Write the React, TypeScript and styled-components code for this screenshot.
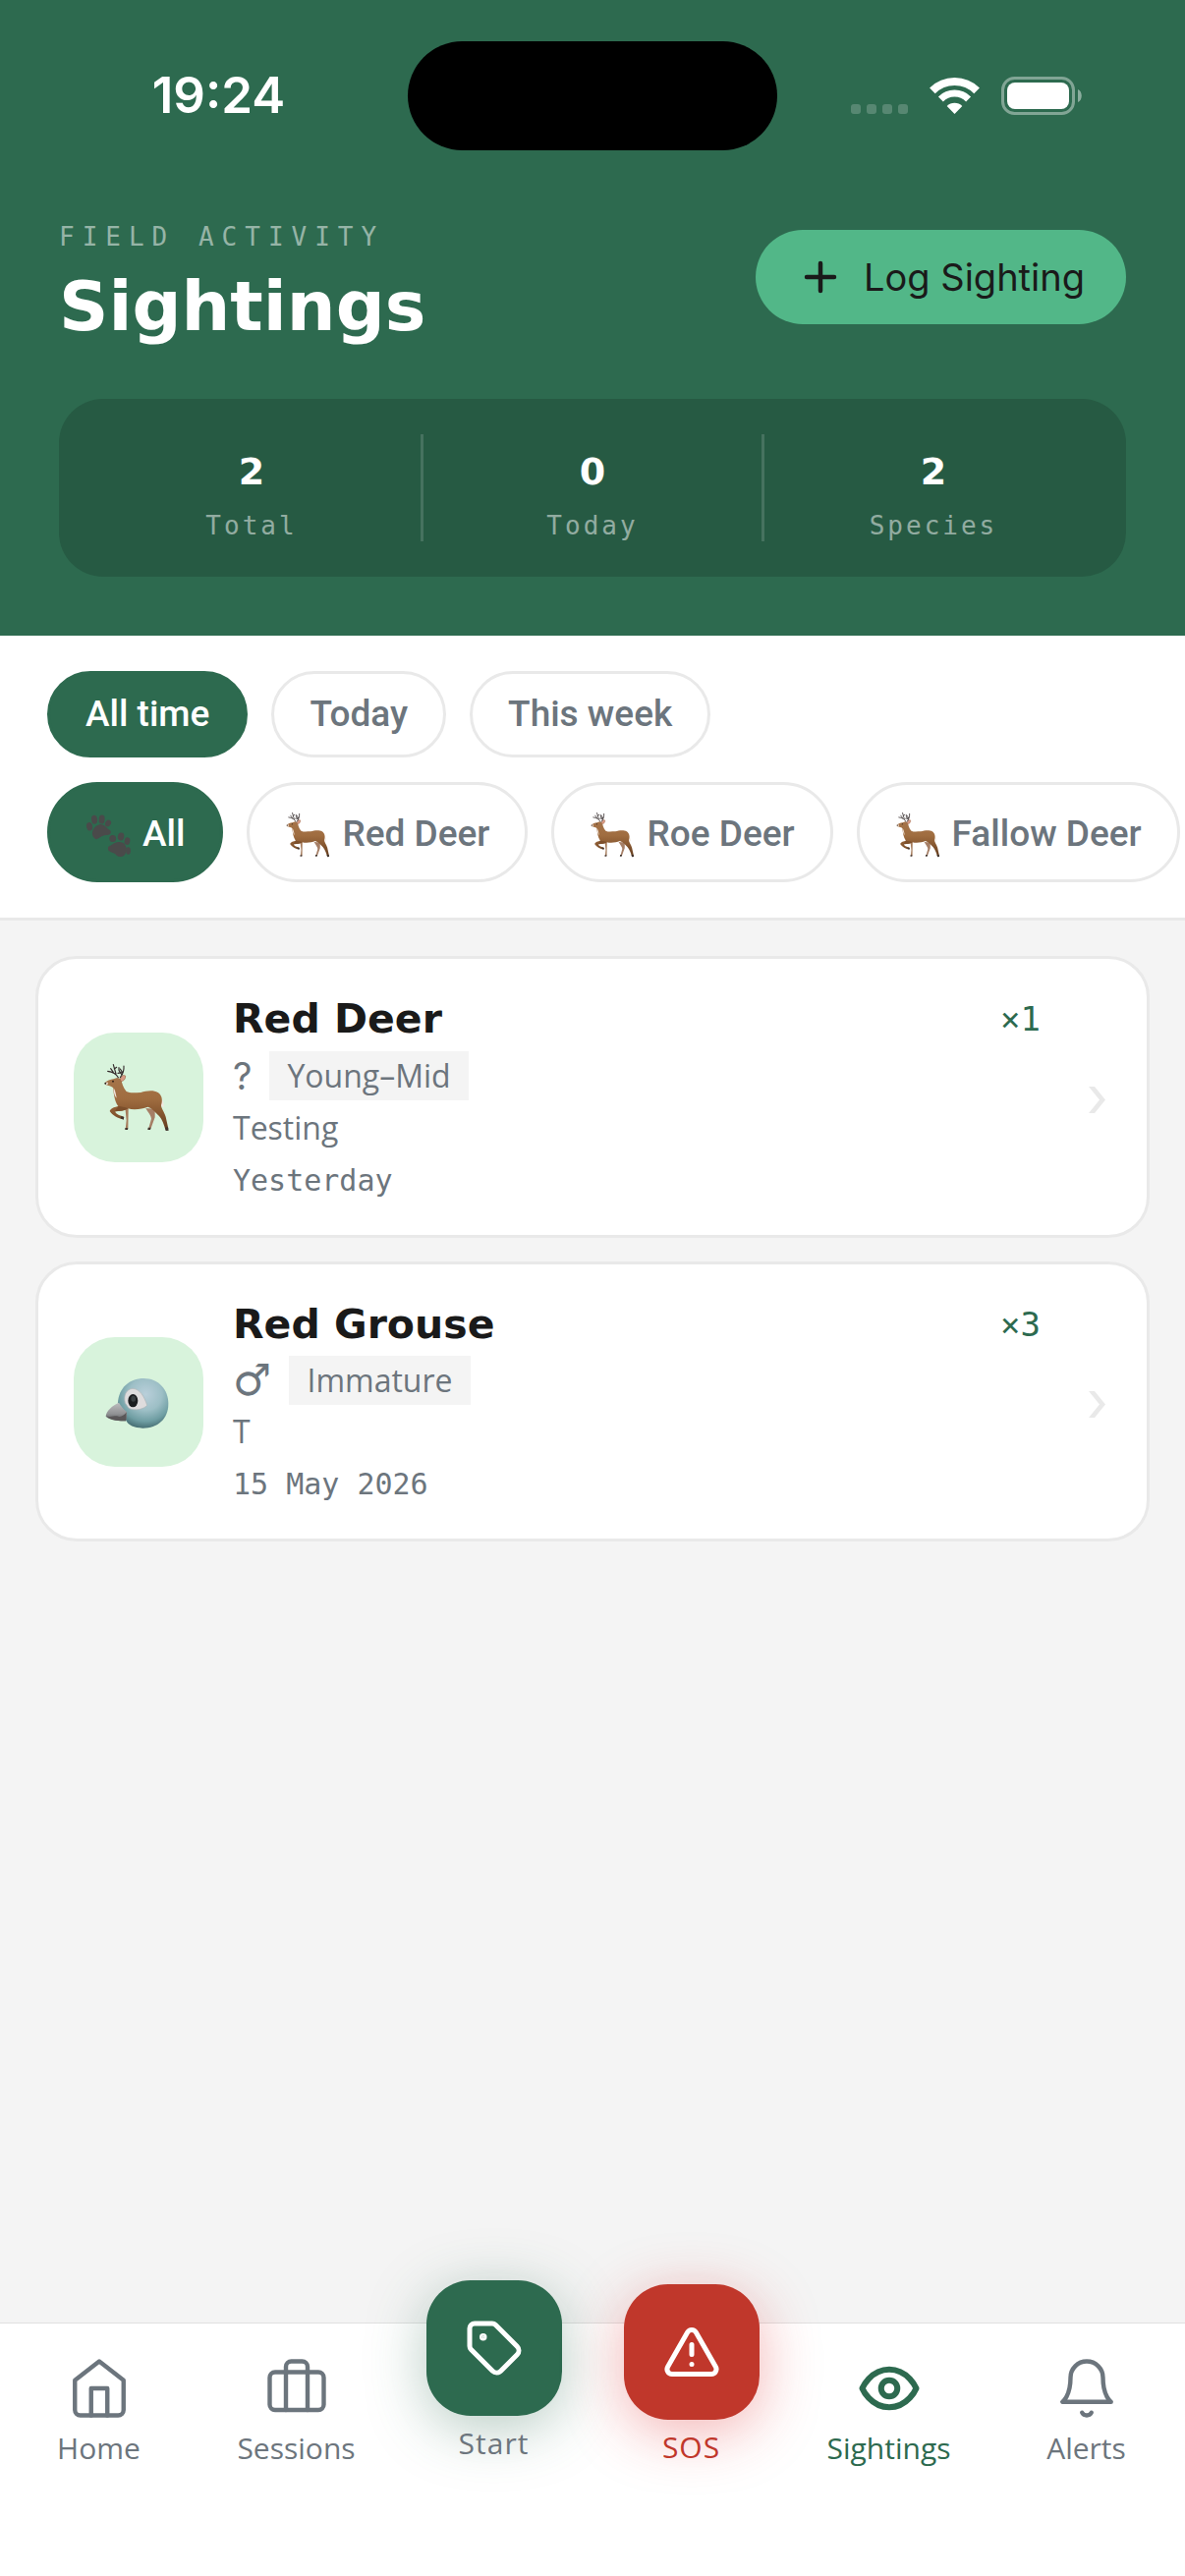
import React, { useState } from "react";
import styled, { createGlobalStyle } from "styled-components";

const color = {
  forest: "#2D6A4F",
  mint: "#52B788",
  pale: "#D8F3DC",
  ink: "#1A1A1A",
  muted: "#6C757D",
  line: "#E9E9E9",
  page: "#F4F4F4",
  danger: "#C0372B",
};

const sans = `"Open Sans", "Noto Sans", sans-serif`;
const display = `"DejaVu Sans", "Open Sans", sans-serif`;
const mono = `"DejaVu Sans Mono", "Liberation Mono", monospace`;
const system = `Inter, Roboto, sans-serif`;
const medium = `Roboto, Inter, sans-serif`;

const GlobalStyle = createGlobalStyle`
  *, *::before, *::after { box-sizing: border-box; }
  body { margin: 0; background: ${color.page}; font-family: ${sans}; color: ${color.ink}; }
  h1, h2, p, dl, dt, dd, ul { margin: 0; padding: 0; }
  ul { list-style: none; }
  button { font: inherit; cursor: pointer; }
  a { color: inherit; text-decoration: none; }
  svg { display: block; flex: none; }
`;

const Screen = styled.div`
  display: flex;
  flex-direction: column;
  min-height: 100vh;
  overflow-x: hidden;
`;

const Header = styled.header`
  background: ${color.forest};
  color: #fff;
  padding-bottom: 60px;
`;

const StatusBar = styled.div`
  display: grid;
  grid-template-columns: 1fr 376px 1fr;
  align-items: center;
  justify-items: center;
  height: 194px;
  padding: 0 30px;
`;

const Clock = styled.time`
  font: 600 51px/60px ${system};
`;

const Island = styled.div`
  width: 100%;
  height: 111px;
  border-radius: 56px;
  background: #000;
`;

const Signals = styled.div`
  display: flex;
  gap: 22px;
`;

const TitleRow = styled.div`
  display: flex;
  align-items: flex-start;
  justify-content: space-between;
  padding: 28px 60px 52px;
`;

const Eyebrow = styled.p`
  font: 400 26px/38px ${mono};
  letter-spacing: 8px;
  text-transform: uppercase;
  color: rgba(255, 255, 255, 0.5);
`;

const Title = styled.h1`
  margin-top: 10px;
  font: 700 70px/84px ${display};
`;

const LogButton = styled.button`
  display: flex;
  align-items: center;
  gap: 20px;
  height: 96px;
  margin-top: 12px;
  padding: 0 42px;
  border: 0;
  border-radius: 48px;
  background: ${color.mint};
  color: ${color.ink};
  font: 400 38px/48px ${system};
`;

const Stats = styled.dl`
  display: flex;
  margin: 0 60px;
  padding: 36px 24px;
  border-radius: 45px;
  background: #265A43;
`;

const Stat = styled.div`
  flex: 1;
  display: flex;
  flex-direction: column-reverse;
  text-align: center;

  & + & {
    border-left: 3px solid rgba(255, 255, 255, 0.15);
  }
`;

const StatValue = styled.dd`
  font: 700 38px/77px ${display};
`;

const StatLabel = styled.dt`
  font: 400 26px/32px ${mono};
  letter-spacing: 3px;
  color: rgba(255, 255, 255, 0.5);
`;

const Filters = styled.section`
  display: flex;
  flex-direction: column;
  gap: 25px;
  padding: 36px 0;
  background: #fff;
  border-bottom: 3px solid ${color.line};
`;

const PillRow = styled.div`
  display: flex;
  gap: 24px;
  padding: 0 48px;
  overflow-x: auto;
  scrollbar-width: none;
`;

const Pill = styled.button<{ $active: boolean; $tall?: boolean }>`
  display: flex;
  flex: none;
  align-items: center;
  gap: 10px;
  padding: ${(p) => (p.$tall ? "20px 36px 16px" : "18px 36px")};
  border: 3px solid ${(p) => (p.$active ? color.forest : color.line)};
  border-radius: 51px;
  background: ${(p) => (p.$active ? color.forest : "#fff")};
  color: ${(p) => (p.$active ? "#fff" : color.muted)};
  font: 500 37px/${(p) => (p.$tall ? 60 : 46)}px ${medium};
  white-space: nowrap;
`;

const List = styled.ul`
  flex: 1;
  display: flex;
  flex-direction: column;
  gap: 24px;
  padding: 36px;
`;

const Card = styled.a`
  display: flex;
  align-items: center;
  gap: 30px;
  padding: 36px;
  border: 3px solid ${color.line};
  border-radius: 42px;
  background: #fff;
`;

const Tile = styled.div`
  display: grid;
  place-items: center;
  flex: none;
  width: 132px;
  height: 132px;
  border-radius: 42px;
  background: ${color.pale};
`;

const Details = styled.div`
  flex: 1;
  min-width: 0;
`;

const NameRow = styled.div`
  display: flex;
  justify-content: space-between;
  align-items: center;
  margin-bottom: 7px;
`;

const Name = styled.h2`
  font: 700 41px/50px ${display};
`;

const Count = styled.span`
  font: 400 34px/50px ${mono};
  color: ${color.forest};
`;

const Meta = styled.div`
  display: flex;
  align-items: center;
  gap: 18px;
  margin-bottom: 5px;
  color: ${color.muted};
`;

const Sex = styled.span<{ $symbol?: boolean }>`
  font-family: ${(p) => (p.$symbol ? display : system)};
  font-size: ${(p) => (p.$symbol ? 44 : 38)}px;
  line-height: ${(p) => (p.$symbol ? 50 : 52)}px;
`;

const Age = styled.span`
  padding: 3px 18px;
  background: ${color.page};
  font: 400 32px/44px ${sans};
`;

const Note = styled.p`
  margin-bottom: 14px;
  font: 400 32px/43px ${sans};
  color: ${color.muted};
`;

const When = styled.time`
  display: block;
  font: 400 30px/38px ${mono};
  color: ${color.muted};
`;

const ChevronSlot = styled.span`
  flex: none;
  display: flex;
  justify-content: flex-end;
  width: 42px;
  padding: 6px 6px 0 0;
`;

const TabBar = styled.nav`
  position: relative;
  display: flex;
  align-items: flex-start;
  padding: 33px 0 110px;
  background: #fff;
  border-top: 1px solid #e0e0e0;
`;

const Tab = styled.a<{ $tone?: string }>`
  flex: 1;
  display: flex;
  flex-direction: column;
  align-items: center;
  gap: 7px;
  color: ${(p) => p.$tone ?? color.muted};
  font: 400 30px/41px ${sans};
`;

const ActionTab = styled(Tab)<{ $lift: number }>`
  margin-top: -${(p) => p.$lift}px;
  letter-spacing: 1px;
`;

const ActionTile = styled.span<{ $fill: string; $glow: string }>`
  display: grid;
  place-items: center;
  width: 138px;
  height: 138px;
  border-radius: 45px;
  background: ${(p) => p.$fill};
  box-shadow: 0 12px 60px ${(p) => p.$glow};
  color: #fff;
`;

function Deer({ size, viewBox }: { size: number; viewBox: string }) {
  return (
    <svg width={size} height={size} viewBox={viewBox} aria-hidden="true">
      <defs>
        <linearGradient id="coat" x1="0" y1="0" x2="0" y2="1">
          <stop offset="0" stopColor="#A5744A" />
          <stop offset="0.4" stopColor="#A06D40" />
          <stop offset="0.65" stopColor="#8A5A32" />
          <stop offset="1" stopColor="#633C1E" />
        </linearGradient>
      </defs>
      <path d="M94 166 L104 168 103 229 95 233 98 205Z" fill="#A67C5C" />
      <path d="M157 168 C165 182 173 190 174 200 L166 229 173 229 185 196 185 170Z" fill="#A67F66" />
      <path d="M94 228h9l-1 6h-8zM164 227h9l-2 7h-8z" fill="#43352E" />
      <path d="M201 134 C211 144 213 157 211 166 L203 158Z" fill="#F3E9E2" />
      <path
        d="M33 90 C39 84 48 80 58 79 L70 75 82 79 C84 91 88 106 98 117 C110 123 124 120 142 120 C158 115 181 112 194 120 C207 128 209 144 204 159 C203 166 213 178 218 194 L226 230 217 233 C213 218 207 202 198 192 C187 182 180 170 163 164 C146 171 120 174 103 169 C92 177 79 177 64 178 C64 185 75 190 90 194 L89 202 C73 200 55 190 47 177 C50 168 64 164 73 162 C61 146 60 126 57 105 C50 100 43 99 35 97Z"
        fill="url(#coat)"
      />
      <path d="M59 106 C65 116 66 127 68 137 C62 132 58 118 59 106Z" fill="#F2E4DA" />
      <path d="M74 162 C82 164 93 163 103 169 C94 176 82 176 64 178 C65 171 70 167 74 162Z" fill="#7C4F2B" />
      <path d="M82 193l9 2-2 8-9-4zM216 227l9-1 2 10-9 1z" fill="#40332C" />
      <path d="M33 89 L42 89 40 97 35 97Z" fill="#F4E6DC" />
      <circle cx="34" cy="92" r="3" fill="#2C211C" />
      <circle cx="57" cy="86" r="2.6" fill="#20150F" />
      <path d="M79 79 C83 68 89 65 95 69 C96 79 89 86 81 86Z" fill="#D99A86" stroke="#8D5833" strokeWidth="1.5" />
      <g fill="none" stroke="#33292A" strokeWidth="3.4" strokeLinecap="round" strokeLinejoin="round">
        <path d="M73 74 C67 63 56 57 41 55 M58 58 L50 47 M66 63 L58 35 M61 48 L68 43" />
        <path d="M79 74 C88 63 91 50 90 39 M84 66 L75 52 75 44 M86 59 L79 48 M72 61 L84 59" />
      </g>
    </svg>
  );
}

function Bird({ size }: { size: number }) {
  return (
    <svg width={size} height={size} viewBox="0 0 270 270" aria-hidden="true">
      <defs>
        <radialGradient id="plumage" cx="0.55" cy="0.32" r="0.72">
          <stop offset="0" stopColor="#B9CFDA" />
          <stop offset="0.45" stopColor="#9DBFC6" />
          <stop offset="0.75" stopColor="#6F9EA3" />
          <stop offset="1" stopColor="#3E6469" />
        </radialGradient>
        <linearGradient id="beak" x1="0" y1="0" x2="0" y2="1">
          <stop offset="0" stopColor="#BDBDBF" />
          <stop offset="0.6" stopColor="#929395" />
          <stop offset="1" stopColor="#59595B" />
        </linearGradient>
      </defs>
      <path d="M72 136 C75 92 107 63 151 63 C195 63 226 96 226 141 C226 187 193 215 148 215 C121 214 104 207 96 190Z" fill="url(#plumage)" />
      <path d="M94 138 C88 115 98 96 117 94 C139 95 153 119 161 145 C151 158 123 163 105 154Z" fill="#DEDCDD" stroke="#ACB4B6" strokeWidth="2" />
      <path d="M75 137 C54 146 36 163 35 179 C44 188 70 194 96 193 C99 185 100 172 99 165 C90 158 82 149 75 137Z" fill="url(#beak)" />
      <path d="M36 178 C49 183 61 176 70 178 C80 183 91 177 98 166 L96 193 C70 194 45 188 36 178Z" fill="#5A5758" />
      <ellipse cx="118" cy="131" rx="15" ry="20" fill="#1B1D1F" />
      <ellipse cx="119" cy="125" rx="7" ry="9" fill="#3B4143" />
    </svg>
  );
}

function Paws() {
  return (
    <svg width="48" height="48" viewBox="0 0 48 48" fill="#4A4A4A" aria-hidden="true">
      <path d="M8 27 C5 22 9 15 15 14 C20 14 21 18 25 20 C27 23 25 25 21 25 C16 25 13 30 10 29Z" />
      <ellipse cx="4" cy="16.300" rx="3" ry="4.200" transform="rotate(-12 4 16)" />
      <ellipse cx="9" cy="9.300" rx="3" ry="4.500" transform="rotate(-6 9 9)" />
      <ellipse cx="16.600" cy="9" rx="3" ry="4.500" transform="rotate(6 16 9)" />
      <ellipse cx="23" cy="13" rx="2.800" ry="3.600" transform="rotate(30 23 13)" />
      <path d="M23 37 C26 36 29 32 34 32 C40 32 43 37 41 42 C41 47 35 48 32 46 C29 42 25 43 23 40Z" />
      <ellipse cx="27.700" cy="28.500" rx="3.400" ry="3.600" />
      <ellipse cx="36" cy="26.500" rx="3.200" ry="4" transform="rotate(12 36 27)" />
      <ellipse cx="42.500" cy="31" rx="2.800" ry="3.800" transform="rotate(12 42 31)" />
      <ellipse cx="43.500" cy="41" rx="2.400" ry="3.800" />
    </svg>
  );
}

type IconProps = { size?: number; weight?: number; children: React.ReactNode };

function Icon({ size = 66, weight = 1.6, children }: IconProps) {
  return (
    <svg
      width={size}
      height={size}
      viewBox="0 0 24 24"
      fill="none"
      stroke="currentColor"
      strokeWidth={weight}
      strokeLinecap="round"
      strokeLinejoin="round"
      aria-hidden="true"
    >
      {children}
    </svg>
  );
}

const periods = ["All time", "Today", "This week"];
const species = ["All", "Red Deer", "Roe Deer", "Fallow Deer"];

const stats = [
  { label: "Total", value: 2 },
  { label: "Today", value: 0 },
  { label: "Species", value: 2 },
];

const sightings = [
  { name: "Red Deer", kind: "deer", count: 1, sex: "?", age: "Young–Mid", note: "Testing", when: "Yesterday" },
  { name: "Red Grouse", kind: "bird", count: 3, sex: "♂", age: "Immature", note: "T", when: "15 May 2026" },
];

export default function App() {
  const [period, setPeriod] = useState("All time");
  const [kind, setKind] = useState("All");

  return (
    <>
      <GlobalStyle />
      <Screen>
        <Header>
          <StatusBar>
            <Clock>19:24</Clock>
            <Island />
            <Signals>
              <svg width="58" height="39" viewBox="0 0 58 39" fill="#fff" fillOpacity="0.2" aria-hidden="true">
                <rect x="0" y="28" width="10" height="10" rx="3" />
                <rect x="16" y="28" width="10" height="10" rx="3" />
                <rect x="32" y="28" width="10" height="10" rx="3" />
                <rect x="48" y="28" width="10" height="10" rx="3" />
              </svg>
              <svg width="51" height="39" viewBox="0 0 51 39" fill="none" stroke="#fff" aria-hidden="true">
                <path d="M2.900 14.400 A32 32 0 0 1 48.100 14.400" strokeWidth="8" />
                <path d="M11.400 22.900 A20 20 0 0 1 39.600 22.900" strokeWidth="7" />
                <path d="M25.500 38 L17.700 30 A11 11 0 0 1 33.300 30Z" fill="#fff" stroke="none" />
              </svg>
              <svg width="82" height="39" viewBox="0 0 82 39" fill="#fff" aria-hidden="true">
                <rect x="1.500" y="1.500" width="72" height="36" rx="12" fill="none" stroke="#fff" strokeOpacity="0.4" strokeWidth="3" />
                <rect x="6" y="6" width="63" height="27" rx="8" />
                <path d="M78 13 C83 15 83 24 78 26Z" fillOpacity="0.45" />
              </svg>
            </Signals>
          </StatusBar>

          <TitleRow>
            <div>
              <Eyebrow>Field activity</Eyebrow>
              <Title>Sightings</Title>
            </div>
            <LogButton type="button">
              <Icon size={48} weight={2.25}>
                <path d="M5 12h14M12 5v14" />
              </Icon>
              Log Sighting
            </LogButton>
          </TitleRow>

          <Stats>
            {stats.map((s) => (
              <Stat key={s.label}>
                <StatLabel>{s.label}</StatLabel>
                <StatValue>{s.value}</StatValue>
              </Stat>
            ))}
          </Stats>
        </Header>

        <Filters aria-label="Filters">
          <PillRow>
            {periods.map((p) => (
              <Pill key={p} type="button" $active={p === period} aria-pressed={p === period} onClick={() => setPeriod(p)}>
                {p}
              </Pill>
            ))}
          </PillRow>
          <PillRow>
            {species.map((s) => (
              <Pill key={s} type="button" $tall $active={s === kind} aria-pressed={s === kind} onClick={() => setKind(s)}>
                {s === "All" ? <Paws /> : <Deer size={48} viewBox="24 24 216 216" />}
                {s}
              </Pill>
            ))}
          </PillRow>
        </Filters>

        <List>
          {sightings.map((s) => (
            <li key={s.name}>
              <Card href="#sighting">
                <Tile>{s.kind === "deer" ? <Deer size={90} viewBox="0 0 270 270" /> : <Bird size={90} />}</Tile>
                <Details>
                  <NameRow>
                    <Name>{s.name}</Name>
                    <Count>×{s.count}</Count>
                  </NameRow>
                  <Meta>
                    <Sex $symbol={s.sex === "♂"}>{s.sex}</Sex>
                    <Age>{s.age}</Age>
                  </Meta>
                  <Note>{s.note}</Note>
                  <When>{s.when}</When>
                </Details>
                <ChevronSlot>
                  <svg width="17" height="27" viewBox="0 0 17 27" fill={color.line} aria-hidden="true">
                    <path d="M0 0h6l11 13.500L6 27H0l11-13.500z" />
                  </svg>
                </ChevronSlot>
              </Card>
            </li>
          ))}
        </List>

        <TabBar aria-label="Main">
          <Tab href="#home">
            <Icon>
              <path d="m3 9 9-7 9 7v11a2 2 0 0 1-2 2H5a2 2 0 0 1-2-2z" />
              <path d="M9 22V12h6v10" />
            </Icon>
            Home
          </Tab>
          <Tab href="#sessions">
            <Icon>
              <rect x="2" y="6" width="20" height="14" rx="2" />
              <path d="M16 20V4a2 2 0 0 0-2-2h-4a2 2 0 0 0-2 2v16" />
            </Icon>
            Sessions
          </Tab>
          <ActionTab href="#start" $lift={77}>
            <ActionTile $fill={color.forest} $glow="rgba(45, 106, 79, 0.35)">
              <Icon size={60} weight={2}>
                <path d="M12.586 2.586A2 2 0 0 0 11.172 2H4a2 2 0 0 0-2 2v7.172a2 2 0 0 0 .586 1.414l8.704 8.704a2.426 2.426 0 0 0 3.420 0l6.580-6.580a2.426 2.426 0 0 0 0-3.420z" />
                <circle cx="7.500" cy="7.500" r=".5" fill="currentColor" />
              </Icon>
            </ActionTile>
            Start
          </ActionTab>
          <ActionTab href="#sos" $lift={73} $tone={color.danger}>
            <ActionTile $fill={color.danger} $glow="rgba(220, 38, 38, 0.35)">
              <Icon size={60} weight={2}>
                <path d="m21.730 18-8-14a2 2 0 0 0-3.480 0l-8 14A2 2 0 0 0 4 21h16a2 2 0 0 0 1.730-3" />
                <path d="M12 9v4M12 17h.01" />
              </Icon>
            </ActionTile>
            SOS
          </ActionTab>
          <Tab href="#sightings" $tone={color.forest} aria-current="page">
            <Icon weight={2.2}>
              <path d="M2 12s3-7 10-7 10 7 10 7-3 7-10 7-10-7-10-7Z" />
              <circle cx="12" cy="12" r="3" />
            </Icon>
            Sightings
          </Tab>
          <Tab href="#alerts">
            <Icon>
              <path d="M18 8A6 6 0 0 0 6 8c0 7-3 9-3 9h18s-3-2-3-9" />
              <path d="M13.730 21a2 2 0 0 1-3.460 0" />
            </Icon>
            Alerts
          </Tab>
        </TabBar>
      </Screen>
    </>
  );
}
